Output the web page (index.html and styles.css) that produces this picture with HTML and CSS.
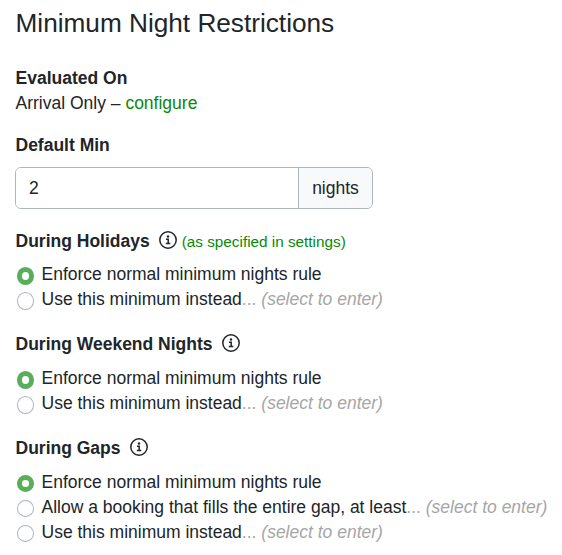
FILE: index.html
```html
<!DOCTYPE html>
<html lang="en">
<head>
<meta charset="utf-8">
<title>Minimum Night Restrictions</title>
<link rel="stylesheet" href="styles.css">
</head>
<body>
<svg width="0" height="0" class="defs"><symbol id="info" viewBox="0 0 20 20"><circle cx="10" cy="10" r="8.2" fill="none" stroke="currentColor" stroke-width="1.5"/><circle cx="10" cy="6.5" r="1.2" fill="currentColor"/><path d="M8 9.2h2.2v4M7.8 13.4h4.5" fill="none" stroke="currentColor" stroke-width="1.5"/></symbol></svg>
<main>
<h1>Minimum Night Restrictions</h1>
<section class="evaluated">
<h2>Evaluated On</h2>
<p>Arrival Only – <a>configure</a></p>
</section>
<section class="default">
<h2>Default Min</h2>
<div class="group"><input type="text" value="2" aria-label="Default minimum"><span class="unit">nights</span></div>
</section>
<section class="rules holidays">
<h2>During Holidays <svg class="info"><use href="#info"/></svg><a class="note">(as specified in settings)</a></h2>
<label><input type="radio" name="h" checked><span>Enforce normal minimum nights rule</span></label>
<label><input type="radio" name="h"><span>Use this minimum instead<span class="dots">... </span><i>(select to enter)</i></span></label>
</section>
<section class="rules weekends">
<h2>During Weekend Nights <svg class="info"><use href="#info"/></svg></h2>
<label><input type="radio" name="w" checked><span>Enforce normal minimum nights rule</span></label>
<label><input type="radio" name="w"><span>Use this minimum instead<span class="dots">... </span><i>(select to enter)</i></span></label>
</section>
<section class="rules gaps">
<h2>During Gaps <svg class="info"><use href="#info"/></svg></h2>
<label><input type="radio" name="g" checked><span>Enforce normal minimum nights rule</span></label>
<label><input type="radio" name="g"><span>Allow a booking that fills the entire gap, at least<span class="dots">... </span><i>(select to enter)</i></span></label>
<label><input type="radio" name="g"><span>Use this minimum instead<span class="dots">... </span><i>(select to enter)</i></span></label>
</section>
</main>
</body>
</html>
```
FILE: styles.css
```css
* { box-sizing: border-box; }
body { margin: 0; background: #fff; color: #212529; font: 17.5px/25px "Liberation Sans", Arial, sans-serif; overflow: hidden; }
.defs { position: absolute; }
main { padding: 7px 0 0 15.5px; white-space: nowrap; }
h1 { margin: 0; font-size: 26.2px; font-weight: 400; line-height: 32px; }
h2 { margin: 0; font-size: 17.5px; line-height: 25px; display: flex; align-items: center; }
p { margin: 0; }
a { color: #088a08; }
.evaluated { margin-top: 27px; }
.default { margin-top: 17px; }
.group { display: flex; width: 358px; height: 42px; margin: 9px 0 0 -0.5px; border: 1px solid #adb5bd; border-radius: 6px; overflow: hidden; }
.group input { width: 282px; border: 0; padding: 0 13px; font: inherit; color: inherit; background: #fff; }
.unit { flex: 1; display: flex; align-items: center; justify-content: center; border-left: 1px solid #adb5bd; background: #f8f9fa; }
.rules { margin-top: 19px; }
.rules h2 { margin-bottom: 8px; }
.info { width: 20px; height: 20px; margin: -3px 0 0 8.3px; }
.note { margin: 1px 0 0 3.7px; font-size: 15.3px; font-weight: 400; }
label { display: flex; height: 25px; }
label input { appearance: none; flex: none; width: 17.5px; height: 18px; margin: 5px 7.5px 0 1px; border: 1px solid #adb5bd; border-radius: 50%; background: #fff; }
label input:checked { border: 5px solid #5aad5a; }
.dots, i { color: #a6a6a6; }
.weekends, .gaps { margin-top: 20px; }
.weekends h2, .gaps h2 { margin-bottom: 9px; }
.gaps label input { height: 17px; }
```
